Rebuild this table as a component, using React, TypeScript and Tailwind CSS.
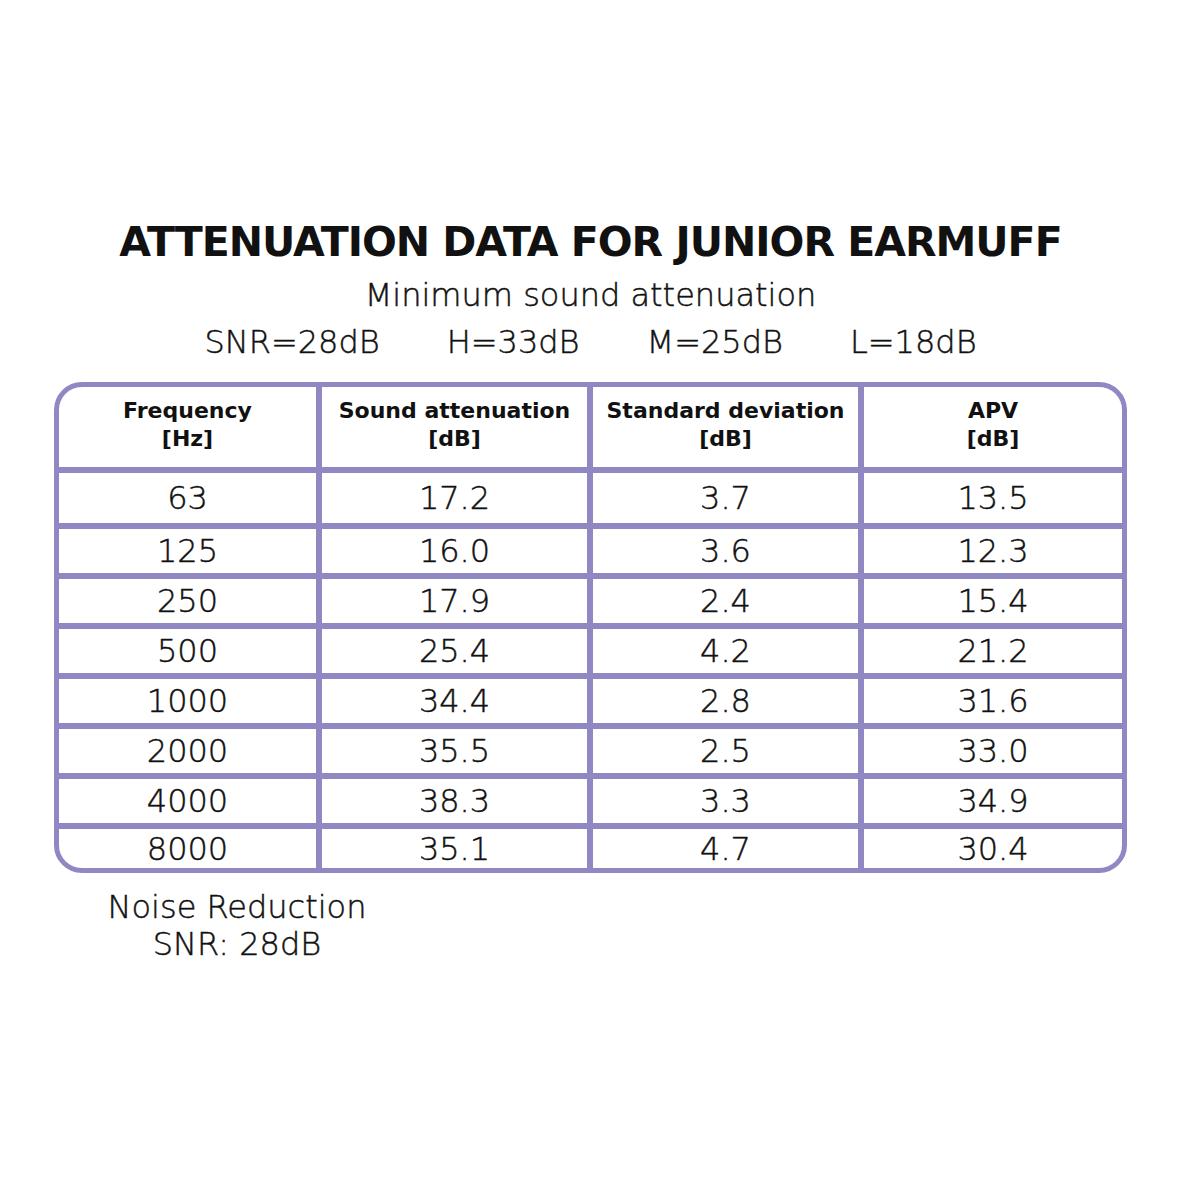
const rows: [string, string, string, string][] = [
  ['63', '17.2', '3.7', '13.5'],
  ['125', '16.0', '3.6', '12.3'],
  ['250', '17.9', '2.4', '15.4'],
  ['500', '25.4', '4.2', '21.2'],
  ['1000', '34.4', '2.8', '31.6'],
  ['2000', '35.5', '2.5', '33.0'],
  ['4000', '38.3', '3.3', '34.9'],
  ['8000', '35.1', '4.7', '30.4'],
]

const headers = [
  ['Frequency', '[Hz]'],
  ['Sound attenuation', '[dB]'],
  ['Standard deviation', '[dB]'],
  ['APV', '[dB]'],
]

const rowHeights = ['h-[50px]', 'h-[44px]', 'h-[44px]', 'h-[44px]', 'h-[44px]', 'h-[44px]', 'h-[44px]', 'h-[39px]']

// thin weight gets a hair of stroke so it reads like the book weight in the picture
const book = 'font-light [-webkit-text-stroke:0.45px_#111]'

export default function App() {
  return (
    <div className="w-[1181px] h-[1181px] bg-white flex flex-col items-center pt-[219px] text-[#111] font-['DejaVu_Sans',sans-serif]">
      <h1 className="text-[41px] leading-[46px] font-bold tracking-[-1px]">ATTENUATION DATA FOR JUNIOR EARMUFF</h1>
      <p className={'mt-[12px] text-[32px] leading-[36px] ' + book}>Minimum sound attenuation</p>
      <div className={'mt-[11px] flex gap-[67px] text-[32px] leading-[36px] ' + book}>
        <span>SNR=28dB</span>
        <span>H=33dB</span>
        <span>M=25dB</span>
        <span>L=18dB</span>
      </div>

      <div className="mt-[22px] w-[1073px] border-[5px] border-[#8f88c2] rounded-[28px] overflow-hidden">
        <div className="grid grid-cols-[257px_265px_265px_258px] gap-[6px] bg-[#8f88c2]">
          {headers.map(([a, b]) => (
            <div key={a} className="h-[80px] bg-white flex flex-col items-center justify-center text-[22px] leading-[28px] font-bold pb-[4px]">
              <span>{a}</span>
              <span>{b}</span>
            </div>
          ))}
          {rows.map((r, i) =>
            r.map((v, j) => (
              <div key={i + '-' + j} className={rowHeights[i] + ' bg-white flex items-center justify-center text-[32px] ' + book}>
                {v}
              </div>
            ))
          )}
        </div>
      </div>

      <div className={'self-start ml-[94px] mt-[16px] w-[286px] text-center text-[32px] leading-[37px] ' + book}>
        <p>Noise Reduction</p>
        <p>SNR: 28dB</p>
      </div>
    </div>
  )
}
